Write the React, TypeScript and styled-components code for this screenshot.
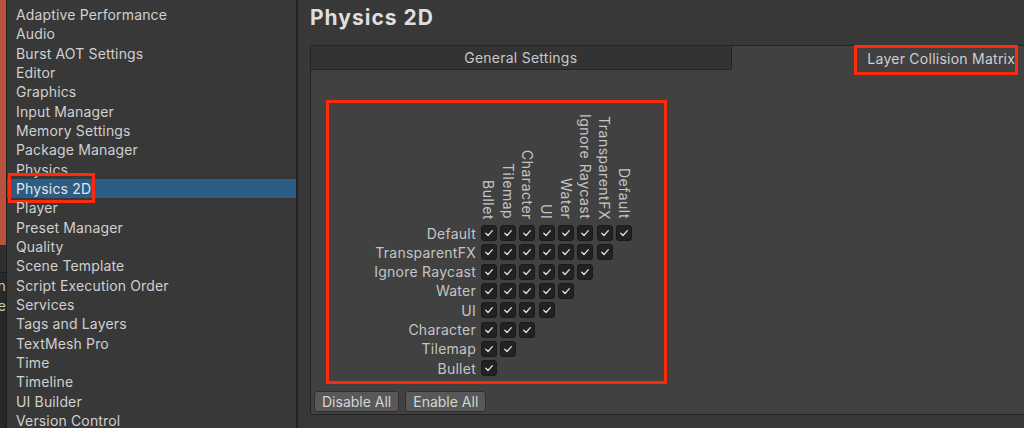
import React from 'react';
import styled, { createGlobalStyle } from 'styled-components';

const GlobalStyle = createGlobalStyle`
  * { box-sizing: border-box; }
  html, body {
    margin: 0;
    padding: 0;
    background: #383838;
  }
  body {
    width: 1024px;
    height: 428px;
    overflow: hidden;
    font-family: Inter, "Noto Sans", sans-serif;
    letter-spacing: 0.15px;
    -webkit-font-smoothing: antialiased;
  }
`;

const settingsItems = [
  'Adaptive Performance',
  'Audio',
  'Burst AOT Settings',
  'Editor',
  'Graphics',
  'Input Manager',
  'Memory Settings',
  'Package Manager',
  'Physics',
  'Physics 2D',
  'Player',
  'Preset Manager',
  'Quality',
  'Scene Template',
  'Script Execution Order',
  'Services',
  'Tags and Layers',
  'TextMesh Pro',
  'Time',
  'Timeline',
  'UI Builder',
  'Version Control',
];

const layers = [
  'Default',
  'TransparentFX',
  'Ignore Raycast',
  'Water',
  'UI',
  'Character',
  'Tilemap',
  'Bullet',
];

const ROW = 19.33;

const CheckIcon = () => (
  <svg width='16' height='16' viewBox='0 0 16 16'>
    <path
      d='M4.3 8.3 L6.9 10.9 L11.8 5.3'
      fill='none'
      stroke='#dedede'
      strokeWidth='1.5'
      strokeLinecap='round'
      strokeLinejoin='round'
    />
  </svg>
);

const App = () => {
  return (
    <>
      <GlobalStyle />
      <Window>
        <EdgeStrip>
          <EdgeRed />
          <EdgeDark />
          <EdgeLower>
            <EdgeLine>Main</EdgeLine>
            <EdgeLine>Scene</EdgeLine>
          </EdgeLower>
        </EdgeStrip>

        <Sidebar>
          {settingsItems.map((item) => (
            <SidebarItem key={item} selected={item === 'Physics 2D'}>
              {item}
              {item === 'Physics 2D' && <SidebarHighlight />}
            </SidebarItem>
          ))}
        </Sidebar>

        <Divider />

        <Main>
          <Title>Physics 2D</Title>
          <Panel>
            <Tabs>
              <Tab>General Settings</Tab>
              <Tab active>
                Layer Collision Matrix
                <TabHighlight />
              </Tab>
            </Tabs>
            <PanelBody>
              <MatrixBox>
                <HeaderRow>
                  <HeaderSpacer />
                  {[...layers].reverse().map((layer) => (
                    <HeaderCell key={layer}>
                      <VerticalLabel>{layer}</VerticalLabel>
                    </HeaderCell>
                  ))}
                </HeaderRow>
                {layers.map((layer, i) => (
                  <MatrixRow key={layer}>
                    <RowLabel>{layer}</RowLabel>
                    {Array.from({ length: layers.length - i }).map((_, j) => (
                      <BoxCell key={j}>
                        <CheckBox>
                          <CheckIcon />
                        </CheckBox>
                      </BoxCell>
                    ))}
                  </MatrixRow>
                ))}
              </MatrixBox>
              <ButtonRow>
                <Button>Disable All</Button>
                <Button>Enable All</Button>
              </ButtonRow>
            </PanelBody>
          </Panel>
        </Main>
      </Window>
    </>
  );
};

const Window = styled.div`
  display: flex;
  width: 1024px;
  height: 428px;
  overflow: hidden;
  background: #383838;
`;

const EdgeStrip = styled.div`
  display: flex;
  flex-direction: column;
  width: 7px;
  flex-shrink: 0;
  border-right: 1px solid #1e1e1e;
  background: #282828;
`;

const EdgeRed = styled.div`
  height: 245px;
  background: #b6523e;
`;

const EdgeDark = styled.div`
  height: 28px;
  background: #2e2e2e;
  border-bottom: 1px solid #1b1b1b;
`;

const EdgeLower = styled.div`
  display: flex;
  flex-direction: column;
  padding-top: 3px;
`;

const EdgeLine = styled.div`
  display: flex;
  justify-content: flex-end;
  overflow: hidden;
  white-space: nowrap;
  height: 20px;
  line-height: 20px;
  font-size: 14px;
  color: #c8c8c8;
`;

const Sidebar = styled.div`
  display: flex;
  flex-direction: column;
  width: 289px;
  flex-shrink: 0;
  padding-top: 5px;
  background: #383838;
`;

const SidebarItem = styled.div<{ selected?: boolean }>`
  position: relative;
  height: ${ROW}px;
  line-height: ${ROW}px;
  padding-left: 9px;
  font-size: 14px;
  white-space: nowrap;
  color: ${({ selected }) => (selected ? '#e4e4e4' : '#d0d0d0')};
  background: ${({ selected }) => (selected ? '#2c5d87' : 'transparent')};
`;

const SidebarHighlight = styled.div`
  position: absolute;
  left: 1px;
  top: -6px;
  width: 87px;
  height: 30px;
  border: 3px solid #fd2a0c;
`;

const Divider = styled.div`
  width: 2px;
  flex-shrink: 0;
  background: #232323;
`;

const Main = styled.div`
  display: flex;
  flex-direction: column;
  flex: 1;
  padding-left: 12px;
  overflow: hidden;
`;

const Title = styled.h1`
  margin: 0 0 9px;
  height: 36px;
  line-height: 36px;
  font-size: 21px;
  font-weight: 700;
  letter-spacing: 1px;
  color: #dedede;
  white-space: nowrap;
`;

const Panel = styled.div`
  display: flex;
  flex-direction: column;
  width: 842px;
  height: 370px;
  flex-shrink: 0;
  background: #414141;
  border: 1px solid #242424;
  border-radius: 3px;
`;

const Tabs = styled.div`
  display: flex;
  height: 24px;
`;

const Tab = styled.div<{ active?: boolean }>`
  position: relative;
  flex: 1;
  display: flex;
  align-items: center;
  justify-content: center;
  font-size: 14px;
  letter-spacing: 0.25px;
  color: ${({ active }) => (active ? '#d0d0d0' : '#c8c8c8')};
  background: ${({ active }) => (active ? '#414141' : '#333333')};
  border-bottom: ${({ active }) => (active ? 'none' : '1px solid #242424')};
  border-right: ${({ active }) => (active ? 'none' : '1px solid #242424')};
  border-top-left-radius: 3px;
`;

const TabHighlight = styled.div`
  position: absolute;
  left: 122px;
  top: -1px;
  width: 164px;
  height: 30px;
  border: 3px solid #fd2a0c;
`;

const PanelBody = styled.div`
  display: flex;
  flex-direction: column;
  padding: 30px 0 0 3px;
`;

const MatrixBox = styled.div`
  display: flex;
  flex-direction: column;
  width: 341px;
  height: 284px;
  margin-left: 12px;
  border: 3px solid #fd2a0c;
`;

const HeaderRow = styled.div`
  display: flex;
  align-items: flex-end;
  height: 120.5px;
`;

const HeaderSpacer = styled.div`
  width: 150px;
  flex-shrink: 0;
`;

const HeaderCell = styled.div`
  display: flex;
  justify-content: center;
  align-items: flex-end;
  width: ${ROW}px;
  flex-shrink: 0;
  padding-bottom: 4px;
`;

const VerticalLabel = styled.span`
  writing-mode: vertical-rl;
  white-space: nowrap;
  font-size: 14px;
  letter-spacing: 0.5px;
  line-height: ${ROW}px;
  color: #c4c4c4;
`;

const MatrixRow = styled.div`
  display: flex;
  align-items: center;
  height: ${ROW}px;
`;

const RowLabel = styled.div`
  width: 150px;
  flex-shrink: 0;
  padding-right: 3px;
  text-align: right;
  white-space: nowrap;
  font-size: 14px;
  letter-spacing: 0.25px;
  line-height: ${ROW}px;
  color: #c4c4c4;
`;

const BoxCell = styled.div`
  display: flex;
  justify-content: center;
  align-items: center;
  width: ${ROW}px;
  height: ${ROW}px;
  flex-shrink: 0;
`;

const CheckBox = styled.div`
  display: flex;
  align-items: center;
  justify-content: center;
  width: 16px;
  height: 16px;
  background: #222222;
  border: 1px solid #1a1a1a;
  border-radius: 3px;
`;

const ButtonRow = styled.div`
  display: flex;
  gap: 6px;
  margin-top: 7px;
`;

const Button = styled.button`
  height: 21px;
  padding: 0 7px;
  font-family: Inter, "Noto Sans", sans-serif;
  font-size: 14px;
  color: #d4d4d4;
  background: #585858;
  border: 1px solid #303030;
  border-radius: 3px;
`;

export default App;
